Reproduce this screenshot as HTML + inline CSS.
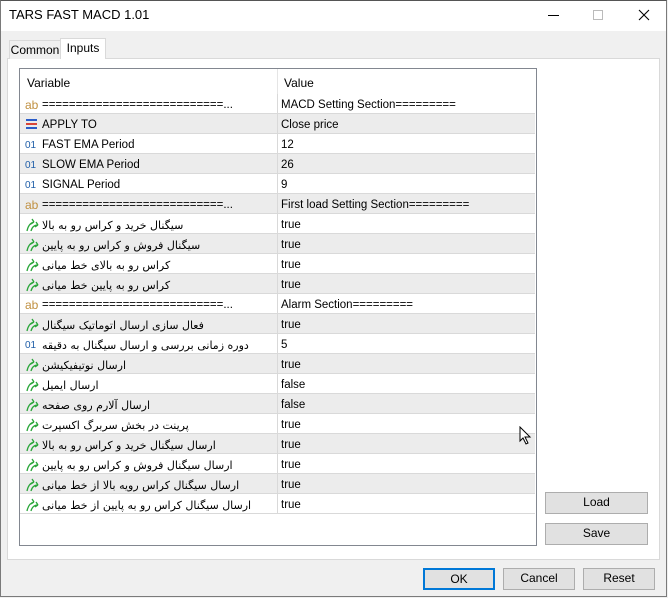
<!DOCTYPE html><html><head><meta charset="utf-8"><style>
*{margin:0;padding:0;box-sizing:border-box}
body{width:668px;height:598px;background:#f0f0f0;font-family:"Liberation Sans","DejaVu Sans",sans-serif;font-size:12px;color:#000;position:relative;overflow:hidden}
.a{position:absolute}
.win{left:0;top:0;width:667px;height:597px;border:1px solid #7a7a7a;border-top-color:#555}
.title{left:1px;top:1px;width:665px;height:30px;background:#fff}
.btn{position:absolute;background:#e1e1e1;border:1px solid #adadad;text-align:center;line-height:19px;font-size:12px}
.row{position:absolute;left:0;width:515px;height:20px;border-bottom:1px solid #d9d9d9;font-size:11.5px;line-height:19px}
.row.g{background:#ececec}
.row .n{position:absolute;left:22px;top:2px;white-space:nowrap}
.row .v{position:absolute;left:257px;top:0;border-left:1px solid #d9d9d9;padding:2px 0 0 3px;height:20px;width:258px}
.row .i{position:absolute;left:5px;top:2px;font-size:11px}
.ab{color:#c09040}.o1{color:#1f5ea8;font-size:10px!important}
.ar{font-family:"DejaVu Sans",sans-serif;font-size:11px}
</style></head><body>
<div class="a win"></div>
<div class="a title"></div>
<div class="a" style="left:9px;top:7px;font-size:13px">TARS FAST MACD 1.01</div>
<div class="a" style="left:548px;top:15px;width:11px;height:1px;background:#000"></div>
<div class="a" style="left:593px;top:10px;width:10px;height:10px;border:1px solid #bbb"></div>
<svg class="a" style="left:638px;top:9px" width="12" height="12"><path d="M1 1L11 11M11 1L1 11" stroke="#000" stroke-width="1.1"/></svg>
<div class="a" style="left:7px;top:58px;width:653px;height:502px;background:#fff;border:1px solid #d9d9d9"></div>
<div class="a" style="left:9px;top:40px;width:52px;height:19px;border:1px solid #d9d9d9;border-bottom:none;background:#f0f0f0;text-align:center;line-height:19px">Common</div>
<div class="a" style="left:60px;top:38px;width:46px;height:21px;border:1px solid #d9d9d9;border-bottom:none;background:#fff;text-align:center;line-height:19px">Inputs</div>
<div class="a" style="left:19px;top:68px;width:518px;height:478px;border:1px solid #828790;background:#fff;overflow:hidden">
<div class="a" style="left:0;top:0;width:516px;height:25px;background:#fff"><span class="a" style="left:7px;top:7px">Variable</span><span class="a" style="left:257px;top:0;height:25px;border-left:1px solid #e5e5e5;padding:7px 0 0 6px">Value</span></div>
<div id="rows"></div>
</div>
<div class="btn" style="left:545px;top:492px;width:103px;height:22px">Load</div>
<div class="btn" style="left:545px;top:523px;width:103px;height:22px">Save</div>
<div class="btn" style="left:423px;top:568px;width:72px;height:22px;border:2px solid #0078d7;line-height:18px">OK</div>
<div class="btn" style="left:503px;top:568px;width:72px;height:22px">Cancel</div>
<div class="btn" style="left:583px;top:568px;width:72px;height:22px">Reset</div>
<script>
var A='<svg width="14" height="14"><path d="M2 13C3 8 5 5 9 4M9 4L7 1M9 4L6 6M6 13C7 9 9 7 13 7M13 7L11 4M13 7L10 9" stroke="#2aa63a" stroke-width="1.3" fill="none"/></svg>';
var E='<svg width="13" height="12"><rect x="1" y="1" width="11" height="2" fill="#2a5cc9"/><rect x="1" y="5" width="11" height="2" fill="#d8453a"/><rect x="1" y="9" width="11" height="2" fill="#2a5cc9"/></svg>';
var eq='===========================...';
var R=[['ab',eq,'MACD Setting Section========='],['e','APPLY TO','Close price'],['1','FAST EMA Period','12'],['1','SLOW EMA Period','26'],['1','SIGNAL Period','9'],['ab',eq,'First load Setting Section========='],
['a','سیگنال خرید و کراس رو به بالا','true'],['a','سیگنال فروش و کراس رو به پایین','true'],['a','کراس رو به بالای خط میانی','true'],['a','کراس رو به پایین خط میانی','true'],['ab',eq,'Alarm Section========='],
['a','فعال سازی ارسال اتوماتیک سیگنال','true'],['1','دوره زمانی بررسی و ارسال سیگنال به دقیقه','5'],['a','ارسال نوتیفیکیشن','true'],['a','ارسال ایمیل','false'],['a','ارسال آلارم روی صفحه','false'],['a','پرینت در بخش سربرگ اکسپرت','true'],['a','ارسال سیگنال خرید و کراس رو به بالا','true'],['a','ارسال سیگنال فروش و کراس رو به پایین','true'],['a','ارسال سیگنال کراس رویه بالا از خط میانی','true'],['a','ارسال سیگنال کراس رو به پایین از خط میانی','true']];
var h='';R.forEach(function(r,k){var ic=r[0]=='ab'?'<span class="ab" style="font-size:12px">ab</span>':r[0]=='e'?'<span style="position:relative;top:2px">'+E+'</span>':r[0]=='1'?'<span class="o1">01</span>':'<span style="position:relative;top:2px">'+A+'</span>';
var ar=/[\u0600-\u06ff]/.test(r[1]);
h+='<div class="row'+(k%2?' g':'')+'" style="top:'+(25+k*20)+'px"><span class="i">'+ic+'</span><span class="n'+(ar?' ar':'')+'"'+(ar?' dir="rtl"':'')+'>'+r[1]+'</span><span class="v">'+r[2]+'</span></div>';});
document.getElementById('rows').innerHTML=h;
</script>
<svg class="a" style="left:519px;top:426px" width="14" height="20"><path d="M1 1L1 15L4 12L7 18L9 17L6 11L11 11Z" fill="#fff" stroke="#000"/></svg>
</body></html>
